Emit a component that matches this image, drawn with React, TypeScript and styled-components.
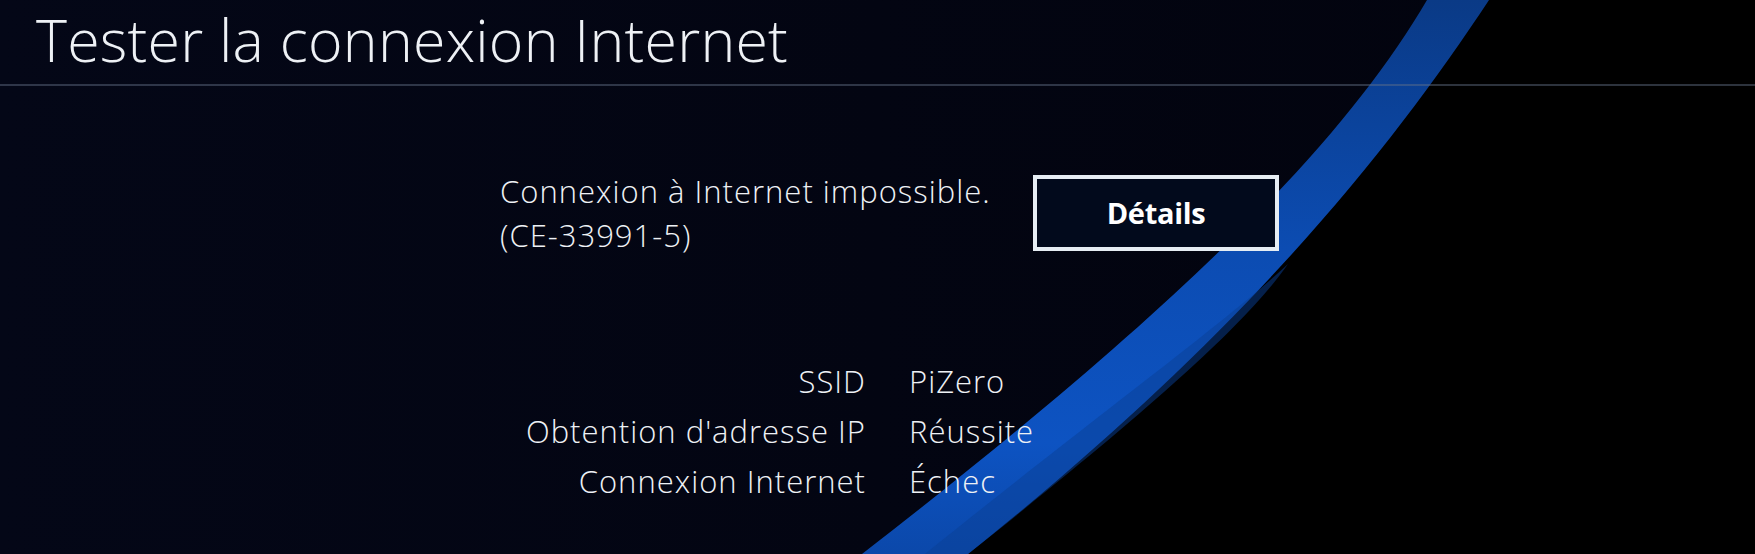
import React from "react";
import styled, { createGlobalStyle } from "styled-components";

const GlobalStyle = createGlobalStyle`
  html, body {
    margin: 0;
    padding: 0;
    background: #000;
  }
  * { box-sizing: border-box; }
`;

const Screen = styled.div`
  position: relative;
  width: 1755px;
  height: 554px;
  overflow: hidden;
  background: #030514;
  font-family: "Open Sans", "Noto Sans", sans-serif;
  color: #eef1f5;
`;

const Backdrop = styled.svg`
  position: absolute;
  left: 0;
  top: 0;
  width: 1755px;
  height: 554px;
  pointer-events: none;
`;

const Layer = styled.div`
  position: relative;
  display: flex;
  flex-direction: column;
`;

const Header = styled.header`
  height: 86px;
  padding-left: 36px;
  border-bottom: 2px solid rgba(100, 112, 135, 0.45);
`;

const Title = styled.h1`
  margin: 0;
  font-size: 59px;
  line-height: 79px;
  font-weight: 300;
  letter-spacing: 0.25px;
  white-space: nowrap;
`;

const Content = styled.main`
  display: flex;
  flex-direction: column;
  padding-left: 500px;
  padding-top: 83px;
`;

const MessageRow = styled.div`
  display: flex;
  align-items: flex-start;
`;

const Message = styled.p`
  margin: 0;
  width: 533px;
  font-size: 31px;
  line-height: 44px;
  font-weight: 300;
  letter-spacing: 1px;
`;

const DetailsButton = styled.button`
  margin-top: 6px;
  width: 246px;
  height: 76px;
  border: 4px solid #e6edf3;
  background: #020a1c;
  color: #ffffff;
  font-family: "Open Sans", "Noto Sans", sans-serif;
  font-size: 29px;
  font-weight: 700;
  letter-spacing: -0.3px;
  display: flex;
  align-items: center;
  justify-content: center;
  padding: 0 0 2px;
`;

const InfoGrid = styled.dl`
  margin: 99px 0 0;
  display: grid;
  grid-template-columns: 366px auto;
  column-gap: 43px;
  font-size: 31px;
  line-height: 50px;
  font-weight: 300;
  letter-spacing: 1px;
`;

const Label = styled.dt`
  text-align: right;
  white-space: nowrap;
`;

const Value = styled.dd`
  margin: 0;
  white-space: nowrap;
`;

const rows: [string, string][] = [
  ["SSID", "PiZero"],
  ["Obtention d'adresse IP", "Réussite"],
  ["Connexion Internet", "Échec"],
];

export default function App() {
  return (
    <>
      <GlobalStyle />
      <Screen>
        <Backdrop viewBox="0 0 1755 554" aria-hidden="true">
          <defs>
            <linearGradient id="stripe" x1="0" y1="0" x2="0" y2="1">
              <stop offset="0" stopColor="#0a3a86" />
              <stop offset="0.45" stopColor="#0c4cb2" />
              <stop offset="0.8" stopColor="#0d53c2" />
              <stop offset="1" stopColor="#0b48aa" />
            </linearGradient>
            <linearGradient id="navy" x1="0" y1="0" x2="1" y2="0">
              <stop offset="0" stopColor="#040717" />
              <stop offset="1" stopColor="#02030d" />
            </linearGradient>
          </defs>
          <rect x="0" y="0" width="1755" height="554" fill="url(#navy)" />
          <path
            d="M 968 554 C 1245 333, 1390 150, 1489 0 L 1755 0 L 1755 554 Z"
            fill="#000000"
          />
          <path
            d="M 1427 0 C 1345 140, 1190 300, 862 554 L 968 554 C 1245 333, 1390 150, 1489 0 Z"
            fill="url(#stripe)"
          />
          <path
            d="M 925 554 C 1110 405, 1222 325, 1288 264 C 1248 322, 1150 410, 968 554 Z"
            fill="#0a3f96"
            opacity="0.5"
          />
        </Backdrop>
        <Layer>
          <Header>
            <Title>Tester la connexion Internet</Title>
          </Header>
          <Content>
            <MessageRow>
              <Message>
                Connexion à Internet impossible.
                <br />
                (CE-33991-5)
              </Message>
              <DetailsButton>Détails</DetailsButton>
            </MessageRow>
            <InfoGrid>
              {rows.map(([label, value]) => (
                <React.Fragment key={label}>
                  <Label>{label}</Label>
                  <Value>{value}</Value>
                </React.Fragment>
              ))}
            </InfoGrid>
          </Content>
        </Layer>
      </Screen>
    </>
  );
}
